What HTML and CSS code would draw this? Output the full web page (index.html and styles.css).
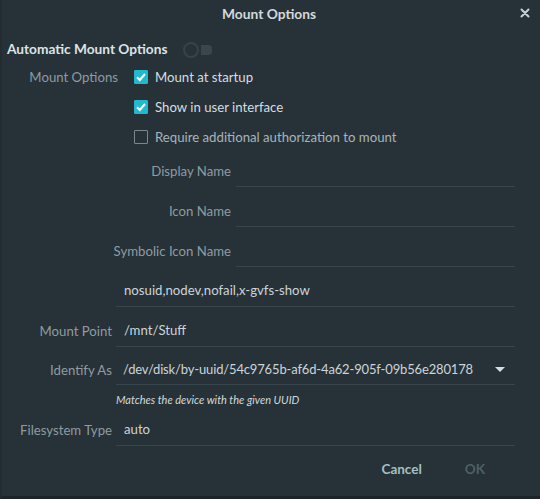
FILE: index.html
```html
<!DOCTYPE html>
<html>
<head>
<meta charset="utf-8">
<link rel="stylesheet" href="styles.css">
</head>
<body>
<div class="window">
  <div class="titlebar">
    <span class="title">Mount Options</span>
    <span class="close">
      <svg width="10" height="10" viewBox="0 0 10 10"><path d="M1.5 1.5 L8.5 8.5 M8.5 1.5 L1.5 8.5" stroke="#c9d1d5" stroke-width="2" stroke-linecap="round"/></svg>
    </span>
  </div>

  <div class="header">
    <span class="heading">Automatic Mount Options</span>
    <span class="switch"><span class="knob"></span><span class="track"></span></span>
  </div>

  <div class="form">
    <div class="label top">Mount Options</div>
    <div class="opts">
      <div class="check-row"><span class="cb checked"><svg width="14" height="14" viewBox="0 0 14 14"><path d="M3 7.2 L5.8 10 L11 4" fill="none" stroke="#fff" stroke-width="2"/></svg></span><span class="ctext">Mount at startup</span></div>
      <div class="check-row"><span class="cb checked"><svg width="14" height="14" viewBox="0 0 14 14"><path d="M3 7.2 L5.8 10 L11 4" fill="none" stroke="#fff" stroke-width="2"/></svg></span><span class="ctext">Show in user interface</span></div>
      <div class="check-row"><span class="cb"></span><span class="ctext dim">Require additional authorization to mount</span></div>
      <div class="subform">
        <div class="label">Display Name</div><div class="entry"></div>
        <div class="label">Icon Name</div><div class="entry"></div>
        <div class="label">Symbolic Icon Name</div><div class="entry"></div>
      </div>
    </div>

    <div></div>
    <div class="entry"><span class="val">nosuid,nodev,nofail,x-gvfs-show</span></div>

    <div class="label">Mount Point</div>
    <div class="entry"><span class="val">/mnt/Stuff</span></div>

    <div class="label">Identify As</div>
    <div class="entry combo"><span class="val">/dev/disk/by-uuid/54c9765b-af6d-4a62-905f-09b56e280178</span><span class="arrow"></span></div>

    <div></div>
    <div class="hint">Matches the device with the given UUID</div>

    <div class="label">Filesystem Type</div>
    <div class="entry"><span class="val">auto</span></div>
  </div>

  <div class="buttons">
    <span class="btn cancel">Cancel</span>
    <span class="btn ok">OK</span>
  </div>
</div>
</body>
</html>
```

FILE: styles.css
```css
html, body {
  margin: 0;
  padding: 0;
  background: #263238;
}
.window {
  width: 540px;
  height: 499px;
  box-sizing: border-box;
  background: #263238;
  font-family: "Lato", "Noto Sans", sans-serif;
  font-size: 13.2px;
  color: #c9d1d5;
  border-bottom: 3px solid #1c252a;
  border-left: 2px solid #222c31;
  display: flex;
  flex-direction: column;
}
.titlebar {
  height: 27px;
  position: relative;
  display: flex;
  align-items: center;
  justify-content: center;
}
.title {
  font-weight: bold;
  font-size: 13.8px;
  color: #d3d9dc;
  margin-left: -4px;
}
.close {
  position: absolute;
  right: 10px;
  top: 8px;
  width: 10px;
  height: 10px;
  display: flex;
}
.header {
  margin-top: 9px;
  height: 24px;
  display: flex;
  align-items: center;
  padding-left: 5px;
}
.heading {
  font-weight: bold;
  font-size: 13.7px;
  color: #dde3e6;
}
.switch {
  margin-left: 16px;
  display: flex;
  align-items: center;
  height: 16px;
  margin-top: 3px;
}
.knob {
  width: 12px;
  height: 12px;
  border: 2px solid #36434a;
  border-radius: 50%;
}
.track {
  width: 11px;
  height: 10px;
  background: #3a464c;
  border-radius: 0 4px 4px 0;
  margin-left: 2px;
}
.form {
  display: grid;
  grid-template-columns: 114px 1fr;
  row-gap: 7px;
  padding-right: 25px;
  margin-top: 2px;
}
.label {
  color: #8f9ba1;
  padding-right: 4px;
  display: flex;
  align-items: center;
  justify-content: flex-end;
  white-space: nowrap;
}
.label.top {
  height: 30px;
  padding-right: 0;
  margin-right: -2px;
}
.opts {
  display: flex;
  flex-direction: column;
  padding-left: 18px;
}
.check-row {
  height: 30px;
  display: flex;
  align-items: center;
}
.cb {
  width: 14px;
  height: 14px;
  box-sizing: border-box;
  border: 1px solid #7b878d;
  border-radius: 1px;
  display: flex;
}
.cb.checked {
  background: #22b8cf;
  border-color: #22b8cf;
}
.cb svg {
  margin: -1px;
}
.ctext {
  margin-left: 7px;
  color: #d6dde0;
}
.ctext.dim {
  color: #a9b4b9;
}
.subform {
  margin-left: -18px;
  margin-top: 2px;
  display: grid;
  grid-template-columns: 120px 1fr;
  row-gap: 7px;
}
.subform .label {
  padding-right: 5px;
}
.entry {
  height: 33px;
  box-sizing: border-box;
  border-bottom: 1px solid #37454c;
  display: flex;
  align-items: center;
  padding-left: 8px;
}
.val {
  color: #cdd4d8;
}
.combo {
  height: 31px;
  padding-left: 7px;
  justify-content: space-between;
  padding-right: 10px;
}
.combo .val {
  white-space: nowrap;
  font-size: 13px;
  letter-spacing: -0.15px;
}
.arrow {
  width: 0;
  height: 0;
  border-left: 5px solid transparent;
  border-right: 5px solid transparent;
  border-top: 5px solid #d5dcdf;
}
.hint {
  font-style: italic;
  font-size: 11px;
  color: #d2d9dc;
  height: 14px;
  display: flex;
  align-items: center;
}
.buttons {
  display: flex;
  justify-content: flex-end;
  align-items: center;
  padding-right: 55px;
  margin-top: 8px;
  height: 30px;
  gap: 43px;
}
.btn {
  font-weight: bold;
  font-size: 13.5px;
}
.cancel {
  color: #a3c0c2;
}
.ok {
  color: #4f6066;
}
```
